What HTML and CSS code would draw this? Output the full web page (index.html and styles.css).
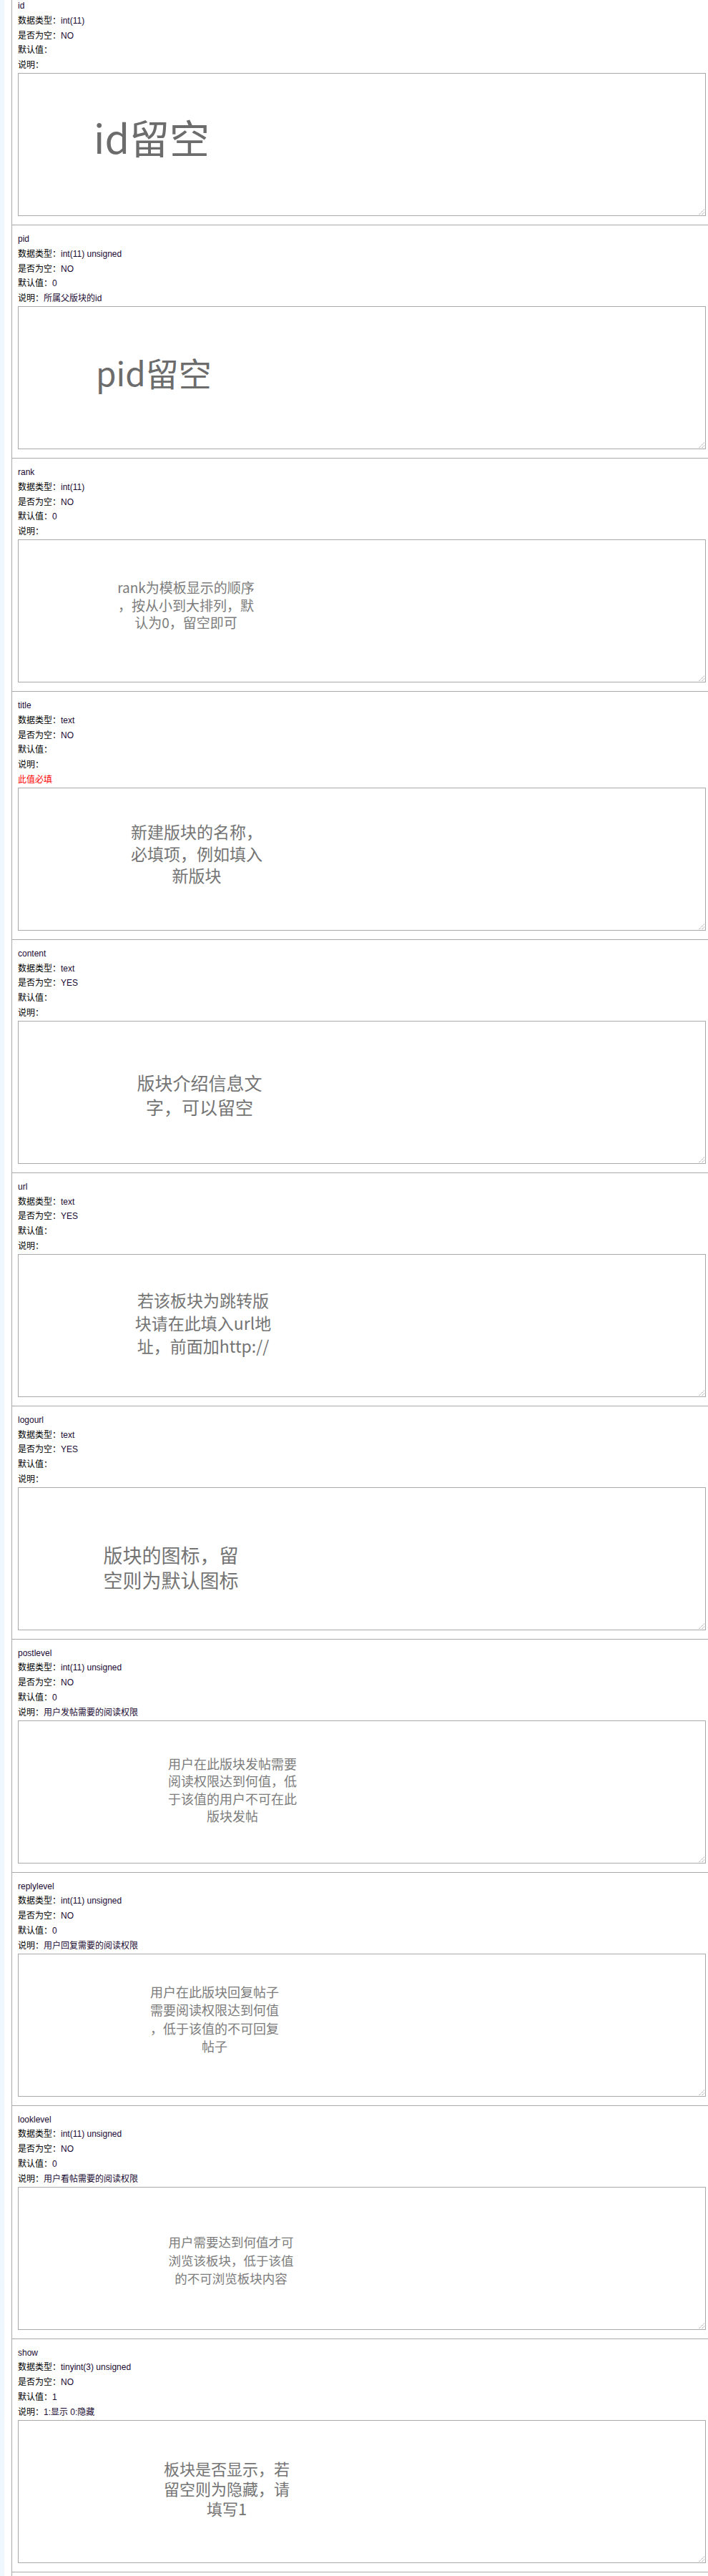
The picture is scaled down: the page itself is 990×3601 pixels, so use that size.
FILE: index.html
```html
<!DOCTYPE html>
<html lang="zh-CN">
<head>
<meta charset="utf-8">
<title>版块字段说明</title>
<link rel="stylesheet" href="styles.css">
</head>
<body>
<div class="page">
  <div class="strip"></div>
  <main class="fields">

    <section class="field">
      <div class="line v">id</div>
      <div class="line"><span class="k">数据类型：</span><span class="v">int(11)</span></div>
      <div class="line"><span class="k">是否为空：</span><span class="v">NO</span></div>
      <div class="line"><span class="k">默认值：</span></div>
      <div class="line"><span class="k">说明：</span></div>
      <div class="ta"><div class="ph ph-id">id留空</div><svg class="grip" viewBox="0 0 8 8"><path d="M0.5 8 L8 0.5 M4.5 8 L8 4.5"/></svg></div>
    </section>

    <section class="field">
      <div class="line v">pid</div>
      <div class="line"><span class="k">数据类型：</span><span class="v">int(11) unsigned</span></div>
      <div class="line"><span class="k">是否为空：</span><span class="v">NO</span></div>
      <div class="line"><span class="k">默认值：</span><span class="v">0</span></div>
      <div class="line"><span class="k">说明：</span><span class="v">所属父版块的id</span></div>
      <div class="ta"><div class="ph ph-pid">pid留空</div><svg class="grip" viewBox="0 0 8 8"><path d="M0.5 8 L8 0.5 M4.5 8 L8 4.5"/></svg></div>
    </section>

    <section class="field">
      <div class="line v">rank</div>
      <div class="line"><span class="k">数据类型：</span><span class="v">int(11)</span></div>
      <div class="line"><span class="k">是否为空：</span><span class="v">NO</span></div>
      <div class="line"><span class="k">默认值：</span><span class="v">0</span></div>
      <div class="line"><span class="k">说明：</span></div>
      <div class="ta"><div class="ph ph-rank">rank为模板显示的顺序<br><span class="cm">，</span>按从小到大排列<span class="cm">，</span>默<br>认为0<span class="cm">，</span>留空即可</div><svg class="grip" viewBox="0 0 8 8"><path d="M0.5 8 L8 0.5 M4.5 8 L8 4.5"/></svg></div>
    </section>

    <section class="field">
      <div class="line v">title</div>
      <div class="line"><span class="k">数据类型：</span><span class="v">text</span></div>
      <div class="line"><span class="k">是否为空：</span><span class="v">NO</span></div>
      <div class="line"><span class="k">默认值：</span></div>
      <div class="line"><span class="k">说明：</span></div>
      <div class="line req">此值必填</div>
      <div class="ta"><div class="ph ph-title">新建版块的名称<span class="cm">，</span><br>必填项<span class="cm">，</span>例如填入<br>新版块</div><svg class="grip" viewBox="0 0 8 8"><path d="M0.5 8 L8 0.5 M4.5 8 L8 4.5"/></svg></div>
    </section>

    <section class="field">
      <div class="line v">content</div>
      <div class="line"><span class="k">数据类型：</span><span class="v">text</span></div>
      <div class="line"><span class="k">是否为空：</span><span class="v">YES</span></div>
      <div class="line"><span class="k">默认值：</span></div>
      <div class="line"><span class="k">说明：</span></div>
      <div class="ta"><div class="ph ph-content">版块介绍信息文<br>字<span class="cm">，</span>可以留空</div><svg class="grip" viewBox="0 0 8 8"><path d="M0.5 8 L8 0.5 M4.5 8 L8 4.5"/></svg></div>
    </section>

    <section class="field">
      <div class="line v">url</div>
      <div class="line"><span class="k">数据类型：</span><span class="v">text</span></div>
      <div class="line"><span class="k">是否为空：</span><span class="v">YES</span></div>
      <div class="line"><span class="k">默认值：</span></div>
      <div class="line"><span class="k">说明：</span></div>
      <div class="ta"><div class="ph ph-url">若该板块为跳转版<br>块请在此填入url地<br>址<span class="cm">，</span>前面加http://</div><svg class="grip" viewBox="0 0 8 8"><path d="M0.5 8 L8 0.5 M4.5 8 L8 4.5"/></svg></div>
    </section>

    <section class="field">
      <div class="line v">logourl</div>
      <div class="line"><span class="k">数据类型：</span><span class="v">text</span></div>
      <div class="line"><span class="k">是否为空：</span><span class="v">YES</span></div>
      <div class="line"><span class="k">默认值：</span></div>
      <div class="line"><span class="k">说明：</span></div>
      <div class="ta"><div class="ph ph-logourl">版块的图标<span class="cm">，</span>留<br>空则为默认图标</div><svg class="grip" viewBox="0 0 8 8"><path d="M0.5 8 L8 0.5 M4.5 8 L8 4.5"/></svg></div>
    </section>

    <section class="field">
      <div class="line v">postlevel</div>
      <div class="line"><span class="k">数据类型：</span><span class="v">int(11) unsigned</span></div>
      <div class="line"><span class="k">是否为空：</span><span class="v">NO</span></div>
      <div class="line"><span class="k">默认值：</span><span class="v">0</span></div>
      <div class="line"><span class="k">说明：</span><span class="v">用户发帖需要的阅读权限</span></div>
      <div class="ta"><div class="ph ph-postlevel">用户在此版块发帖需要<br>阅读权限达到何值<span class="cm">，</span>低<br>于该值的用户不可在此<br>版块发帖</div><svg class="grip" viewBox="0 0 8 8"><path d="M0.5 8 L8 0.5 M4.5 8 L8 4.5"/></svg></div>
    </section>

    <section class="field">
      <div class="line v">replylevel</div>
      <div class="line"><span class="k">数据类型：</span><span class="v">int(11) unsigned</span></div>
      <div class="line"><span class="k">是否为空：</span><span class="v">NO</span></div>
      <div class="line"><span class="k">默认值：</span><span class="v">0</span></div>
      <div class="line"><span class="k">说明：</span><span class="v">用户回复需要的阅读权限</span></div>
      <div class="ta"><div class="ph ph-replylevel">用户在此版块回复帖子<br>需要阅读权限达到何值<br><span class="cm">，</span>低于该值的不可回复<br>帖子</div><svg class="grip" viewBox="0 0 8 8"><path d="M0.5 8 L8 0.5 M4.5 8 L8 4.5"/></svg></div>
    </section>

    <section class="field">
      <div class="line v">looklevel</div>
      <div class="line"><span class="k">数据类型：</span><span class="v">int(11) unsigned</span></div>
      <div class="line"><span class="k">是否为空：</span><span class="v">NO</span></div>
      <div class="line"><span class="k">默认值：</span><span class="v">0</span></div>
      <div class="line"><span class="k">说明：</span><span class="v">用户看帖需要的阅读权限</span></div>
      <div class="ta"><div class="ph ph-looklevel">用户需要达到何值才可<br>浏览该板块<span class="cm">，</span>低于该值<br>的不可浏览板块内容</div><svg class="grip" viewBox="0 0 8 8"><path d="M0.5 8 L8 0.5 M4.5 8 L8 4.5"/></svg></div>
    </section>

    <section class="field">
      <div class="line v">show</div>
      <div class="line"><span class="k">数据类型：</span><span class="v">tinyint(3) unsigned</span></div>
      <div class="line"><span class="k">是否为空：</span><span class="v">NO</span></div>
      <div class="line"><span class="k">默认值：</span><span class="v">1</span></div>
      <div class="line"><span class="k">说明：</span><span class="v">1:显示 0:隐藏</span></div>
      <div class="ta"><div class="ph ph-show">板块是否显示<span class="cm">，</span>若<br>留空则为隐藏<span class="cm">，</span>请<br>填写1</div><svg class="grip" viewBox="0 0 8 8"><path d="M0.5 8 L8 0.5 M4.5 8 L8 4.5"/></svg></div>
    </section>

  </main>
</div>
</body>
</html>
```

FILE: styles.css
```css
html, body {
  margin: 0;
  padding: 0;
  background: #ffffff;
}

body {
  font-family: "Liberation Sans", "Noto Sans CJK SC", sans-serif;
  font-size: 12px;
  color: #000000;
}

.page {
  display: flex;
  min-height: 100vh;
}

.strip {
  flex: none;
  width: 6px;
  background: #eef6fe;
}

.fields {
  flex: 1;
  margin-left: 10px;
  border-left: 1px solid #aaaaaa;
}

.field {
  border-bottom: 1px solid #aaaaaa;
  padding: 9px 0 12px 8px;
}

.field:first-child {
  padding-top: 0;
  margin-top: -2px;
}

.line {
  height: 20.8px;
  line-height: 20.8px;
  white-space: nowrap;
}

.v {
  color: #1a0a33;
}

.k {
  color: #000000;
}

.req {
  color: #ff0000;
}

.ta {
  position: relative;
  box-sizing: border-box;
  width: 962px;
  height: 200px;
  border: 1px solid #a9a9a9;
  background: #ffffff;
  display: flex;
  align-items: center;
}

.grip {
  position: absolute;
  right: 1px;
  bottom: 1px;
  width: 8px;
  height: 8px;
  fill: none;
  stroke: #777777;
  stroke-width: 1;
  stroke-dasharray: 1 1;
}

.ph {
  font-family: "Noto Sans CJK SC", sans-serif;
  color: #747474;
  text-align: center;
  width: 300px;
  white-space: nowrap;
}

.cm {
  font-family: "Noto Sans CJK TC", "Noto Sans CJK SC", sans-serif;
}

.ph-id {
  width: auto;
  text-align: left;
  font-size: 56px;
  line-height: 1.2;
  margin-left: 105px;
  margin-bottom: 23px;
  color: #6c6c6c;
}

.ph-pid {
  width: auto;
  text-align: left;
  font-size: 46px;
  line-height: 1.2;
  margin-left: 108px;
  margin-bottom: 15px;
  color: #6c6c6c;
}

.ph-rank {
  font-size: 19px;
  line-height: 24.5px;
  margin-left: 84px;
  margin-bottom: 16px;
  color: #7c7c7c;
}

.ph-title {
  font-size: 23px;
  line-height: 30.5px;
  margin-left: 99px;
  margin-bottom: 15px;
}

.ph-content {
  font-size: 25px;
  line-height: 34px;
  margin-left: 103px;
  margin-top: 6px;
}

.ph-url {
  font-size: 23px;
  line-height: 31.7px;
  margin-left: 108px;
  margin-bottom: 6px;
}

.ph-logourl {
  font-size: 27px;
  line-height: 35px;
  margin-left: 63px;
  margin-top: 24px;
}

.ph-postlevel {
  font-size: 18px;
  line-height: 24.3px;
  margin-left: 149px;
  margin-bottom: 6px;
  color: #7c7c7c;
}

.ph-replylevel {
  font-size: 18px;
  line-height: 25.3px;
  margin-left: 124px;
  margin-bottom: 16px;
  color: #7c7c7c;
}

.ph-looklevel {
  font-size: 17.5px;
  line-height: 25.5px;
  margin-left: 147px;
  margin-top: 6px;
  color: #7c7c7c;
}

.ph-show {
  font-size: 22px;
  line-height: 28.3px;
  margin-left: 141px;
  margin-bottom: 9px;
}
```
